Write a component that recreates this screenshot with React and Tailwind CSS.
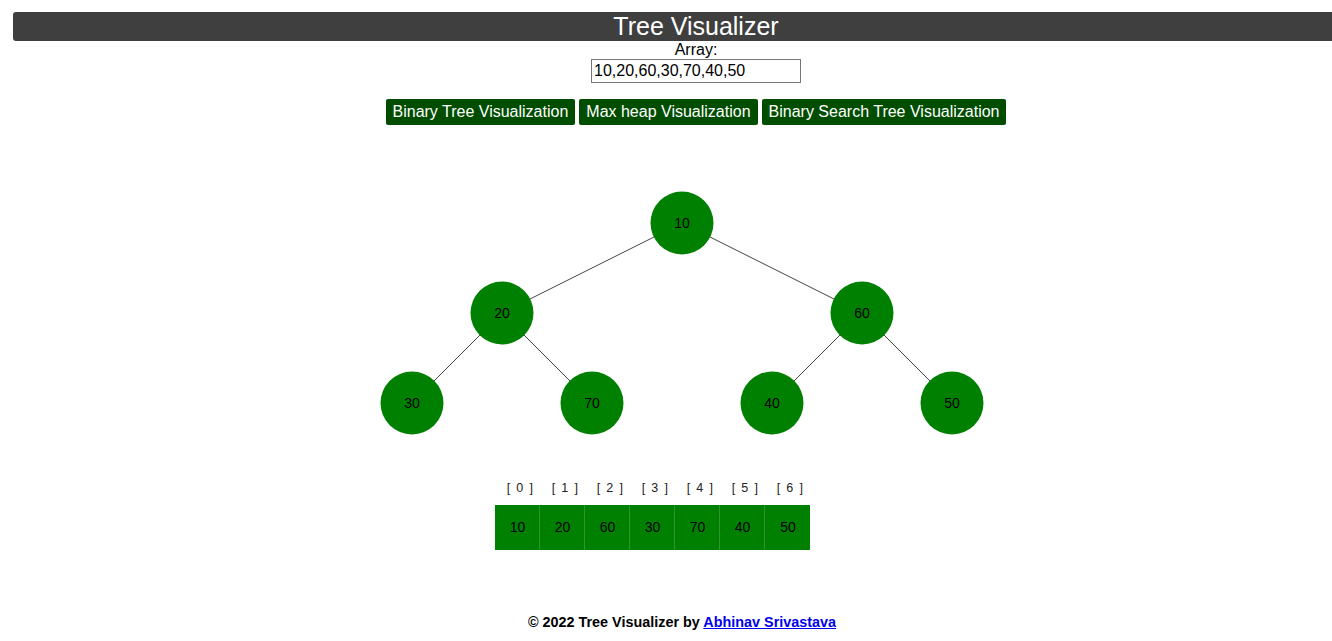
import React from 'react';

const nodes = [
  { v: 10, x: 682, y: 222 },
  { v: 20, x: 502, y: 312 },
  { v: 60, x: 862, y: 312 },
  { v: 30, x: 412, y: 402 },
  { v: 70, x: 592, y: 402 },
  { v: 40, x: 772, y: 402 },
  { v: 50, x: 952, y: 402 },
];

const edges = [
  [0, 1],
  [0, 2],
  [1, 3],
  [1, 4],
  [2, 5],
  [2, 6],
];

const arr = [10, 20, 60, 30, 70, 40, 50];

export default function App() {
  return (
    <div className="w-[1332px] h-[641px] overflow-hidden bg-white font-['Liberation_Sans',Arial,sans-serif] text-black">
      <div className="w-[1392px]">
        <div className="pt-[12px] px-[13px]">
          <h1 className="h-[29px] bg-[#3f3f3f] rounded-[3px] text-white text-center text-[25px] leading-[29px]">
            Tree Visualizer
          </h1>
        </div>
        <div className="flex flex-col items-center">
          <label className="text-[16px] leading-[18px]">Array:</label>
          <input
            type="text"
            defaultValue="10,20,60,30,70,40,50"
            className="w-[210px] h-[24px] border border-[#767676] px-[2px] text-[16px] leading-[20px] outline-none"
          />
          <div className="flex gap-[4px] mt-[16px]">
            <button className="h-[26px] px-[7px] bg-[#004d00] text-white text-[16px] rounded-[2px]">
              Binary Tree Visualization
            </button>
            <button className="h-[26px] px-[7px] bg-[#004d00] text-white text-[16px] rounded-[2px]">
              Max heap Visualization
            </button>
            <button className="h-[26px] px-[7px] bg-[#004d00] text-white text-[16px] rounded-[2px]">
              Binary Search Tree Visualization
            </button>
          </div>
        </div>
      </div>

      <svg width="1332" height="330" viewBox="0 124 1332 330" className="block">
        {edges.map(([a, b], i) => (
          <line
            key={i}
            x1={nodes[a].x}
            y1={nodes[a].y}
            x2={nodes[b].x}
            y2={nodes[b].y}
            stroke="#444"
            strokeWidth="1"
          />
        ))}
        {nodes.map((n) => (
          <g key={n.v}>
            <circle cx={n.x} cy={n.y} r="31.5" fill="#008000" />
            <text
              x={n.x}
              y={n.y + 5}
              textAnchor="middle"
              fontSize="14"
              fontFamily="Liberation Sans, Arial, sans-serif"
              fill="#000"
            >
              {n.v}
            </text>
          </g>
        ))}
      </svg>

      <div className="pl-[495px] mt-[25px]">
        <div className="flex">
          {arr.map((_, i) => (
            <div key={i} className="w-[45px] pl-[6px] text-center text-[12.5px] leading-[16px] tracking-[1.3px] text-[#222] whitespace-pre">
              [ {i} ]
            </div>
          ))}
        </div>
        <div className="flex mt-[9px]">
          {arr.map((v, i) => (
            <div
              key={i}
              className="w-[45px] h-[45px] pl-[1px] flex items-center justify-center bg-[#008000] border-r border-[#2f962f] last:border-r-0 text-[14px]"
            >
              {v}
            </div>
          ))}
        </div>
      </div>

      <div className="w-[1364px] text-center mt-[64px] text-[14.4px] leading-[17px] font-bold">
        © 2022 Tree Visualizer by{' '}
        <a href="#" className="text-[#0000ee] underline">
          Abhinav Srivastava
        </a>
      </div>
    </div>
  );
}
